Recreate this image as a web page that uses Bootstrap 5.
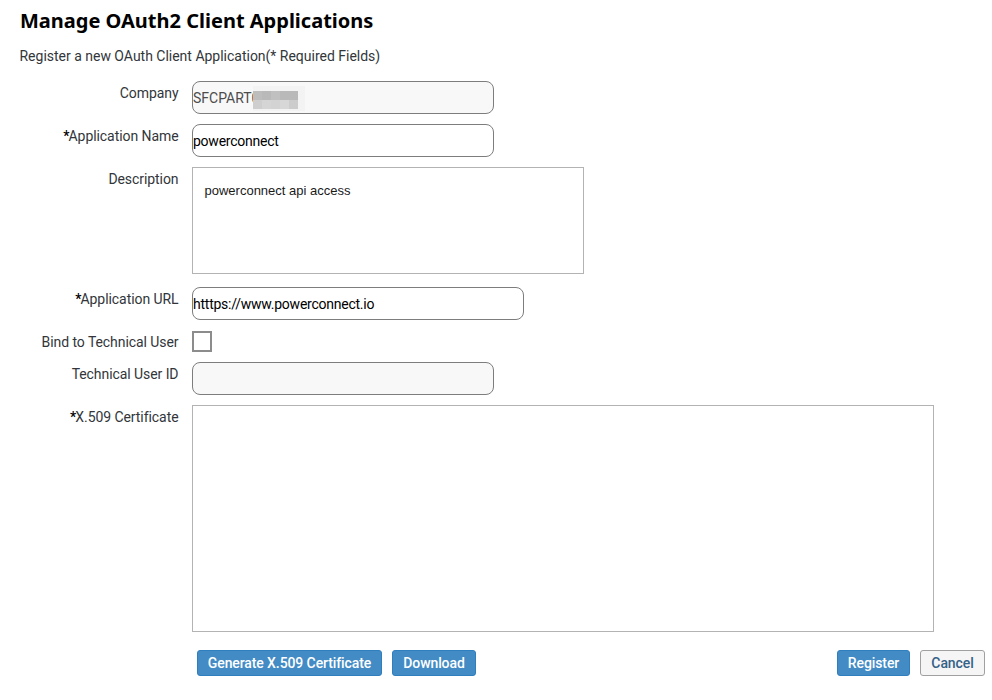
<!DOCTYPE html>
<html lang="en">
<head>
  <meta charset="UTF-8">
  <title>Manage OAuth2 Client Applications</title>
  <link href="https://cdn.jsdelivr.net/npm/bootstrap@5.3.0/dist/css/bootstrap.min.css" rel="stylesheet">
  <style>
    body { font-family: Roboto, "Noto Sans", sans-serif; font-size: 14px; line-height: 18px; color: #32363a; background: #fff; }
    .page-title { font-family: "Noto Sans", sans-serif; font-size: 20px; line-height: 26px; font-weight: 700; color: #000; padding: 8px 0 0 20px; }
    .page-intro { padding: 13px 0 0 19.5px; margin-bottom: 16px; letter-spacing: -.01px; }
    .field-row { margin-bottom: 10px; }
    .field-label { width: 192px; padding: 3px 13.5px 0 0; letter-spacing: -.07px; }
    .field-label b { font-weight: 500; letter-spacing: -1px; color: #000; }
    .check-label { padding-top: 2px; }
    .form-control.field-input { width: 302px; height: 33px; padding: 0; font-size: 14px; line-height: 18px; letter-spacing: -.24px; color: #000; border: 1px solid #7d7d7d; border-radius: 8px; }
    .form-control.field-input:disabled { padding-top: 1px; background: #f8f8f8; color: #4c4c4c; letter-spacing: 0; }
    .form-control.url-input { width: 332px; }
    .form-control.field-area { font: 13px/16px "Liberation Sans", Arial, sans-serif; color: #1a1a1a; border: 1px solid #b3b3b3; border-radius: 0; padding: 15px 11.5px; resize: none; }
    .desc-area { width: 392px; height: 107px; }
    .cert-area { width: 742px; height: 227px; }
    .form-check-input.bind-check { width: 20px; height: 21px; border: 2px solid #8c8c8c; border-radius: 0; margin: 0; }
    .id-mask { left: 61px; top: 5px; }
    .url-row { margin: 13px 0 11px; }
    .action-bar { gap: 10px; padding: 8px 7px 0 197px; }
    .btn.action-btn { height: 26px; padding: 0; font-size: 14px; line-height: 24px; font-weight: 500; letter-spacing: -.1px; border-radius: 3px; color: #fff; background: #428bc5; border: 1px solid #2f7ebd; }
    .btn.cancel-btn { width: 65px; color: #346187; background: #f5f5f5; border-color: #a0a0a0; }
    .generate-btn { width: 185px; }
    .download-btn { width: 84px; }
    .register-btn { width: 73px; }
  </style>
</head>
<body>
  <h1 class="page-title m-0">Manage OAuth2 Client Applications</h1>
  <p class="page-intro">Register a new OAuth Client Application(* Required Fields)</p>

  <form>
    <div class="field-row d-flex">
      <label class="field-label text-end" for="company">Company</label>
      <div class="position-relative">
        <input class="form-control field-input" id="company" value="SFCPART0" disabled>
        <!-- Masked part of the company ID -->
        <svg class="id-mask position-absolute" width="52" height="25" shape-rendering="crispEdges">
          <rect width="52" height="25" fill="#f3f3f3"/>
          <rect y="5" width="9" height="9" fill="#bdbdbd"/>
          <rect x="9" y="5" width="9" height="9" fill="#b9b9b9"/>
          <rect x="18" y="5" width="9" height="9" fill="#c0c0c0"/>
          <rect x="27" y="5" width="9" height="9" fill="#b9b9b9"/>
          <rect x="36" y="5" width="9" height="9" fill="#b9b9b9"/>
          <rect y="14" width="9" height="9" fill="#cecece"/>
          <rect x="9" y="14" width="9" height="9" fill="#d5d5d5"/>
          <rect x="18" y="14" width="9" height="9" fill="#d3d3d3"/>
          <rect x="27" y="14" width="9" height="9" fill="#d7d7d7"/>
          <rect x="36" y="14" width="9" height="9" fill="#cccccc"/>
        </svg>
      </div>
    </div>
    <div class="field-row d-flex">
      <label class="field-label text-end" for="appName"><b>*</b>Application Name</label>
      <input class="form-control field-input" id="appName" value="powerconnect">
    </div>
    <div class="field-row d-flex mb-0">
      <label class="field-label text-end" for="description">Description</label>
      <textarea class="form-control field-area desc-area" id="description">powerconnect api access</textarea>
    </div>
    <div class="url-row d-flex">
      <label class="field-label text-end" for="appUrl"><b>*</b>Application URL</label>
      <input class="form-control field-input url-input" id="appUrl" value="htttps://www.powerconnect.io">
    </div>
    <div class="field-row d-flex">
      <label class="field-label check-label text-end" for="bindUser">Bind to Technical User</label>
      <input class="form-check-input bind-check" type="checkbox" id="bindUser">
    </div>
    <div class="field-row d-flex">
      <label class="field-label text-end" for="techUser">Technical User ID</label>
      <input class="form-control field-input" id="techUser" disabled>
    </div>
    <div class="field-row d-flex">
      <label class="field-label text-end" for="cert"><b>*</b>X.509 Certificate</label>
      <textarea class="form-control field-area cert-area" id="cert"></textarea>
    </div>

    <div class="action-bar d-flex">
      <button type="button" class="btn action-btn generate-btn">Generate X.509 Certificate</button>
      <button type="button" class="btn action-btn download-btn">Download</button>
      <button type="button" class="btn action-btn register-btn ms-auto">Register</button>
      <button type="button" class="btn action-btn cancel-btn">Cancel</button>
    </div>
  </form>

  <script src="https://cdn.jsdelivr.net/npm/bootstrap@5.3.0/dist/js/bootstrap.bundle.min.js"></script>
</body>
</html>
